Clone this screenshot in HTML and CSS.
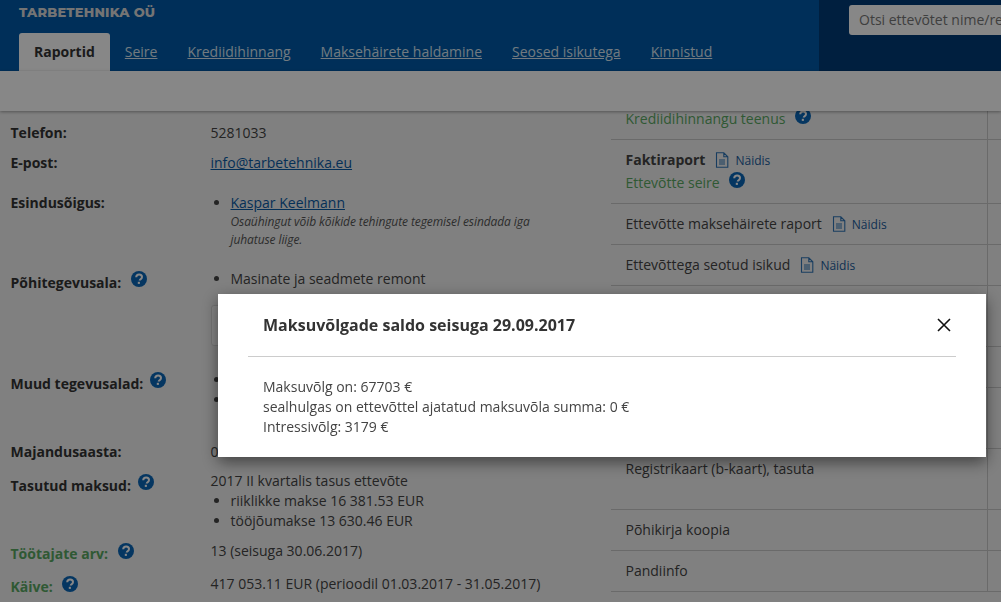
FILE: index.html
```html
<!DOCTYPE html>
<html lang="et">
<head>
<meta charset="utf-8">
<title>Tarbetehnika OÜ</title>
<link rel="stylesheet" href="styles.css">
</head>
<body>
<svg class="defs" width="0" height="0" aria-hidden="true">
  <symbol id="help" viewBox="0 0 16 16">
    <circle cx="8" cy="8" r="8" fill="#0a67b8"/>
    <path d="M5.2 6.2C5.3 4.5 6.5 3.5 8.1 3.5c1.700 0 2.900 1 2.900 2.500 0 1.200-.7 1.800-1.500 2.300-.6.4-.8.7-.8 1.300" fill="none" stroke="#fff" stroke-width="2"/>
    <rect x="6.800" y="10.800" width="2.100" height="2.100" fill="#fff"/>
  </symbol>
  <symbol id="doc" viewBox="0 0 14 16">
    <path d="M1.500 .8h7.300l4 4v10.400H1.500z M8.800 .8v4h4 M4 8h6 M4 10h6 M4 12h6" fill="none" stroke="#2f74b5" stroke-width="1.100"/>
  </symbol>
</svg>

<header class="topbar">
  <div class="brand">
    <div class="company">TARBETEHNIKA OÜ</div>
    <nav class="tabs">
      <a class="tab active">Raportid</a>
      <a class="tab">Seire</a>
      <a class="tab">Krediidihinnang</a>
      <a class="tab">Maksehäirete haldamine</a>
      <a class="tab">Seosed isikutega</a>
      <a class="tab">Kinnistud</a>
    </nav>
  </div>
  <div class="search">
    <div class="search-input">Otsi ettevõtet nime/registrikoodi järgi</div>
  </div>
</header>
<div class="toolbar"></div>

<main class="content">
  <section class="info">
    <div class="row h30"><div class="label">Telefon:</div><div class="value">5281033</div></div>
    <div class="row h40"><div class="label">E-post:</div><div class="value"><a class="link">info@tarbetehnika.eu</a></div></div>
    <div class="row h76">
      <div class="label">Esindusõigus:</div>
      <div class="value">
        <ul class="list"><li><a class="link">Kaspar Keelmann</a><div class="note">Osaühingut võib kõikide tehingute tegemisel esindada iga juhatuse liige.</div></li></ul>
      </div>
    </div>
    <div class="row h101">
      <div class="label low2">Põhitegevusala: <svg class="help wide"><use href="#help"/></svg></div>
      <div class="value">
        <ul class="list"><li>Masinate ja seadmete remont</li></ul>
        <div class="box"></div>
      </div>
    </div>
    <div class="row h72">
      <div class="label low2">Muud tegevusalad: <svg class="help"><use href="#help"/></svg></div>
      <div class="value"><ul class="list"><li>&nbsp;</li><li>&nbsp;</li></ul></div>
    </div>
    <div class="row h29"><div class="label">Majandusaasta:</div><div class="value">0</div></div>
    <div class="row h70">
      <div class="label low3">Tasutud maksud: <svg class="help"><use href="#help"/></svg></div>
      <div class="value">2017 II kvartalis tasus ettevõte
        <ul class="list"><li>riiklikke makse 16 381.53 EUR</li><li>tööjõumakse 13 630.46 EUR</li></ul>
      </div>
    </div>
    <div class="row h33"><div class="label green low2">Töötajate arv: <svg class="help gap"><use href="#help"/></svg></div><div class="value">13 (seisuga 30.06.2017)</div></div>
    <div class="row h30"><div class="label green low2">Käive: <svg class="help gap"><use href="#help"/></svg></div><div class="value">417 053.11 EUR (perioodil 01.03.2017 - 31.05.2017)</div></div>
  </section>

  <section class="reports">
    <div class="report r1"><div class="lifted"><span class="green-text">Krediidihinnangu teenus</span> <svg class="help gap"><use href="#help"/></svg></div></div>
    <div class="report r64"><strong>Faktiraport</strong><svg class="doc"><use href="#doc"/></svg><a class="sample">Näidis</a><div class="sub"><span class="green-text">Ettevõtte seire</span> <svg class="help gap"><use href="#help"/></svg></div></div>
    <div class="report r41">Ettevõtte maksehäirete raport<svg class="doc"><use href="#doc"/></svg><a class="sample">Näidis</a></div>
    <div class="report r41">Ettevõttega seotud isikud<svg class="doc"><use href="#doc"/></svg><a class="sample">Näidis</a></div>
    <div class="report r61"></div>
    <div class="report r41"></div>
    <div class="report r61"></div>
    <div class="report r61">Registrikaart (b-kaart), tasuta</div>
    <div class="report r41">Põhikirja koopia</div>
    <div class="report r41">Pandiinfo</div>
  </section>
</main>

<div class="overlay"></div>
<div class="modal">
  <div class="modal-head">
    <h2 class="modal-title">Maksuvõlgade saldo seisuga 29.09.2017</h2>
    <svg class="close" viewBox="0 0 14 14"><path d="M1 1l12 12M13 1L1 13" stroke="#111" stroke-width="1.600" fill="none"/></svg>
  </div>
  <div class="modal-body">
    Maksuvõlg on: 67703 €<br>
    sealhulgas on ettevõttel ajatatud maksuvõla summa: 0 €<br>
    Intressivõlg: 3179 €
  </div>
</div>
</body>
</html>
```
FILE: styles.css
```css
* { box-sizing: border-box; }
html, body { margin: 0; height: 100%; }
body {
  width: 1001px;
  height: 602px;
  overflow: hidden;
  background: #f2f2f2;
  color: #444;
  font: 14px/20px "Open Sans", sans-serif;
}
.defs { position: absolute; }
.topbar { display: flex; height: 71px; background: #005aa8; }
.brand { width: 819px; padding-left: 19px; }
.company {
  height: 33px;
  padding-top: 2px;
  font: 800 13px/20px Montserrat, "Open Sans", sans-serif;
  letter-spacing: .2px;
  color: #dcdcdc;
}
.tabs { display: flex; gap: 30px; align-items: flex-end; height: 38px; }
.tab { color: #d7e6f2; text-decoration: underline; line-height: 38px; }
.tab.active {
  height: 38px;
  padding: 0 15px;
  margin-right: -15px;
  background: #fff;
  border-radius: 3px 3px 0 0;
  color: #333;
  font-weight: 700;
  text-decoration: none;
}
.search { flex: 1; background: #003c78; padding: 5px 0 0 30px; overflow: hidden; }
.search-input {
  width: 300px;
  height: 30px;
  padding: 0 10px;
  background: #fff;
  border-radius: 3px;
  color: #777;
  font-size: 14px;
  line-height: 30px;
  white-space: nowrap;
  overflow: hidden;
}
.toolbar {
  position: relative;
  z-index: 1;
  height: 40px;
  background: #fff;
  box-shadow: 0 1px 3px rgba(0,0,0,.35);
}
.content { display: flex; height: 491px; overflow: hidden; }
.info { width: 611px; flex: none; padding: 12px 0 0 10.500px; }
.row { display: flex; }
.label { width: 200px; font-weight: 700; color: #333; flex: none; }
.low2 { padding-top: 2px; }
.low3 { padding-top: 3px; }
.value { flex: 1; min-width: 0; }
.h29 { height: 29px; }
.h30 { height: 30px; }
.h33 { height: 33px; }
.h40 { height: 40px; }
.h70 { height: 70px; }
.h72 { height: 72px; }
.h76 { height: 76px; }
.h101 { height: 101px; }
.link { color: #0a5ba5; text-decoration: underline; }
.list { margin: 0; padding: 0 0 0 20px; }
.note { width: 340px; font-size: 12px; font-style: italic; line-height: 18px; color: #555; letter-spacing: -.09px; }
.box { height: 41px; width: 300px; margin-top: 16px; border: 1px solid #ddd; border-radius: 3px; background: #fff; }
.green { color: #5aa863; }
.green-text { color: #5aa863; }
.help { width: 16px; height: 16px; margin-left: 3px; vertical-align: 1px; }
.help.wide { margin-left: 6px; }
.help.gap { margin-left: 6px; vertical-align: 0; }
.reports { position: relative; width: 390px; flex: none; }
.reports::after {
  content: "";
  position: absolute;
  left: 376px;
  top: 0;
  width: 1px;
  height: 480px;
  background: #c8c8c8;
}
.report {
  padding: 0 0 0 14.500px;
  border-bottom: 1px solid #c8c8c8;
  white-space: nowrap;
}
.r1 { height: 29px; display: flow-root; }
.lifted { margin-top: -3px; }
.sub { margin-top: 1px; }
.r64 { height: 64px; padding-top: 10px; }
.r41 { height: 41px; padding-top: 10px; }
.r61 { height: 61px; padding-top: 10px; }
.doc { width: 14px; height: 16px; margin: 0 6px 0 10px; vertical-align: -3px; }
.sample { font-size: 12px; color: #1a5c9c; }
.overlay { position: fixed; z-index: 2; inset: 0; background: rgba(0,0,0,.47); }
.modal {
  position: fixed;
  z-index: 3;
  left: 218px;
  top: 294px;
  width: 768px;
  height: 163px;
  padding: 0 30px;
  background: #fff;
  box-shadow: 0 5px 15px rgba(0,0,0,.5);
}
.modal-head {
  display: flex;
  justify-content: space-between;
  align-items: center;
  height: 63px;
  padding: 0 5px 0 15px;
  border-bottom: 1px solid #ccc;
}
.modal-title { margin: 0; font-size: 16px; line-height: 22px; font-weight: 700; color: #333; }
.close { width: 14px; height: 14px; }
.modal-body { padding: 20px 15px 0; color: #444; }
```
